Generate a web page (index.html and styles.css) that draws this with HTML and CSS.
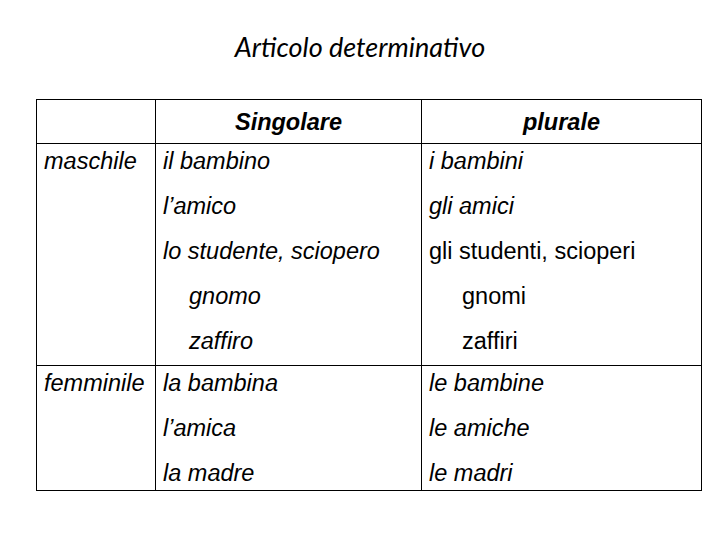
FILE: index.html
```html
<!DOCTYPE html>
<html lang="it">
<head>
<meta charset="utf-8">
<title>Articolo determinativo</title>
<link rel="stylesheet" href="styles.css">
</head>
<body>
<div class="slide">
  <header class="title-bar">
    <h1 class="title">Articolo determinativo</h1>
  </header>
  <table class="grid">
    <colgroup>
      <col class="c-gen">
      <col class="c-sing">
      <col class="c-plur">
    </colgroup>
    <thead>
      <tr class="head-row">
        <th></th>
        <th>Singolare</th>
        <th>plurale</th>
      </tr>
    </thead>
    <tbody>
      <tr class="row-m">
        <td><div class="ln">maschile</div></td>
        <td>
          <div class="ln">il bambino</div>
          <div class="ln">l’amico</div>
          <div class="ln">lo studente, sciopero</div>
          <div class="ln ind-s">gnomo</div>
          <div class="ln ind-s">zaffiro</div>
        </td>
        <td>
          <div class="ln">i bambini</div>
          <div class="ln">gli amici</div>
          <div class="ln up">gli studenti, scioperi</div>
          <div class="ln up ind-p">gnomi</div>
          <div class="ln up ind-p">zaffiri</div>
        </td>
      </tr>
      <tr class="row-f">
        <td><div class="ln">femminile</div></td>
        <td>
          <div class="ln">la bambina</div>
          <div class="ln">l’amica</div>
          <div class="ln">la madre</div>
        </td>
        <td>
          <div class="ln">le bambine</div>
          <div class="ln">le amiche</div>
          <div class="ln">le madri</div>
        </td>
      </tr>
    </tbody>
  </table>
</div>
</body>
</html>
```

FILE: styles.css
```css
html, body {
  margin: 0;
  padding: 0;
  background: #ffffff;
}

.slide {
  width: 720px;
  height: 540px;
  overflow: hidden;
}

.title-bar {
  height: 99px;
  box-sizing: border-box;
  padding-bottom: 5px;
  display: flex;
  align-items: center;
  justify-content: center;
}

.title {
  margin: 0;
  font-family: Lato, "Open Sans", sans-serif;
  font-style: italic;
  font-weight: 400;
  font-size: 27px;
  line-height: 34px;
  color: #000;
}

.grid {
  margin-left: 36px;
  width: 665px;
  table-layout: fixed;
  border-collapse: collapse;
  font-family: "Liberation Sans", Arial, sans-serif;
  font-size: 23.5px;
  font-style: italic;
  color: #000;
}

.c-gen { width: 119px; }
.c-sing { width: 266px; }
.c-plur { width: 280px; }

.grid th,
.grid td {
  border: 1px solid #000;
  vertical-align: top;
  padding: 0 0 0 7px;
  text-align: left;
}

.head-row th {
  height: 43px;
  padding: 0;
  text-align: center;
  vertical-align: middle;
  font-weight: 700;
  font-style: italic;
  line-height: 34px;
}

.ln {
  line-height: 34px;
  height: 34px;
  white-space: nowrap;
}

.ln + .ln {
  margin-top: 11px;
}

.row-m td {
  height: 222px;
  box-sizing: border-box;
}

.row-f td {
  height: 122px;
  box-sizing: border-box;
}

.up {
  font-style: normal;
}

.ind-s {
  padding-left: 26px;
}

.ind-p {
  padding-left: 33px;
}
```
